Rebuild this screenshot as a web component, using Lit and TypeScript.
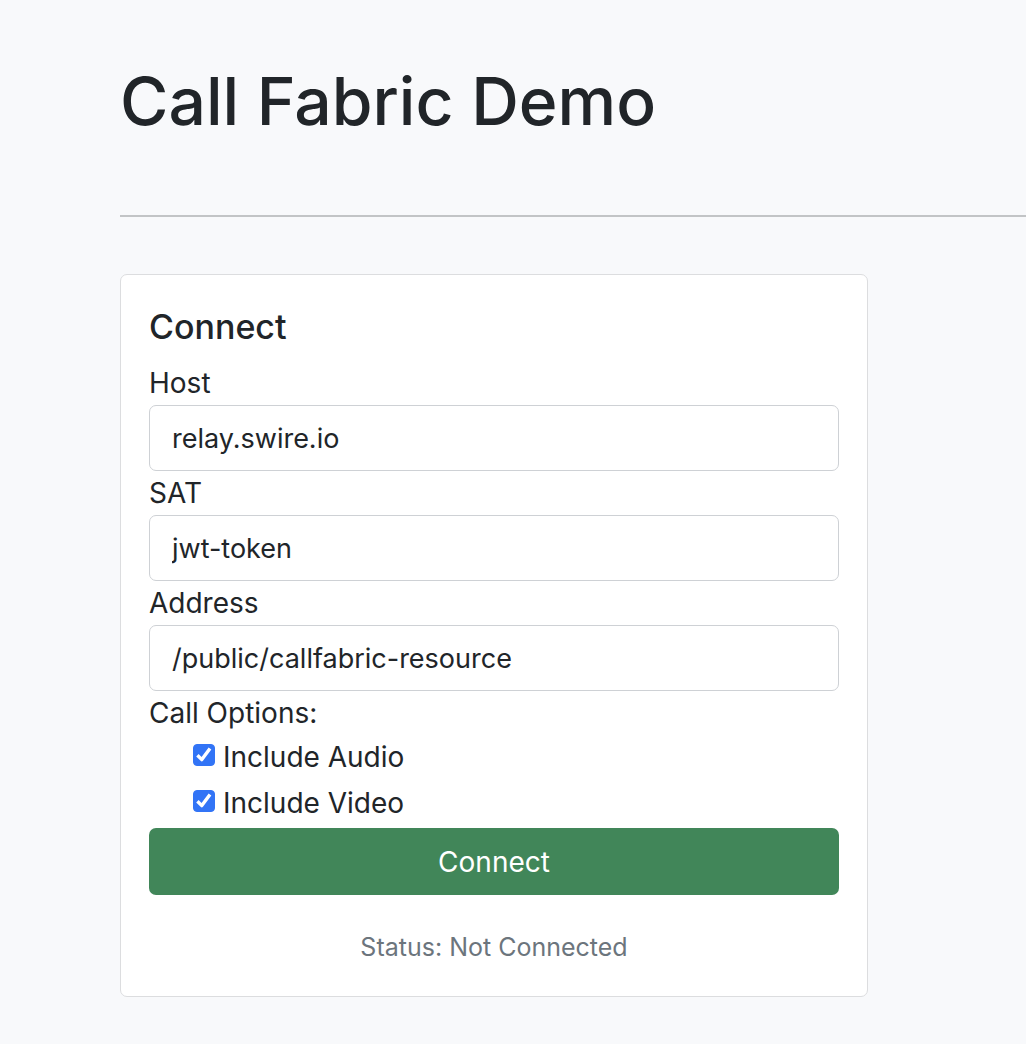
import { LitElement, html, css } from "lit";
import { customElement, state } from "lit/decorators.js";

@customElement("app-root")
export class AppRoot extends LitElement {
  static styles = css`
    :host {
      display: block;
      min-height: 100vh;
      box-sizing: border-box;
      padding: 58px 0 47px 120px;
      background: #f8f9fb;
      color: #212529;
      font-family: Inter, "Liberation Sans", sans-serif;
      font-size: 28px;
      line-height: 44px;
      overflow: hidden;
    }
    *, *::before, *::after { box-sizing: border-box; }
    h1 { margin: 0; font-size: 66px; line-height: 86px; font-weight: 550; }
    hr { margin: 71px 0 57px; border: 0; border-top: 2px solid #c2c4c6; }
    .card {
      width: calc(100% - 158px);
      max-width: 748px;
      padding: 28px;
      background: #fff;
      border: 1px solid #dcdddf;
      border-radius: 7px;
    }
    h2 { margin: 0 0 11px; font-size: 34px; line-height: 47px; font-weight: 550; }
    label, legend { display: block; padding: 0; }
    .field {
      display: block;
      width: 100%;
      height: 66px;
      padding: 0 22px;
      border: 1px solid #ced1d5;
      border-radius: 7px;
      background: #fff;
      color: inherit;
      font: inherit;
      font-size: 27px;
    }
    fieldset { margin: 0; padding: 0 0 3px; border: 0; }
    .options { display: grid; gap: 2px; padding-left: 44px; }
    .option { display: flex; align-items: flex-start; gap: 8px; }
    .box { display: grid; place-items: center; padding-top: 9px; }
    .box > * { grid-area: 1 / 1; }
    .check {
      appearance: none;
      width: 22px;
      height: 22px;
      margin: 0;
      border: 1px solid #767676;
      border-radius: 4px;
      background: #fff;
    }
    .check:checked { background: #3274f6; border-color: #3274f6; }
    .tick { width: 22px; height: 22px; pointer-events: none; z-index: 1; }
    .connect {
      display: block;
      width: 100%;
      height: 67px;
      padding: 0;
      border: 0;
      border-radius: 7px;
      background: #418659;
      color: #fff;
      font: inherit;
    }
    .status { margin: 31px 0 0; text-align: center; color: #6c757d; font-size: 25px; line-height: 42px; }
  `;

  @state() private audio = true;
  @state() private video = true;

  private option(id: string, text: string, checked: boolean, change: (on: boolean) => void) {
    return html`
      <div class="option">
        <span class="box">
          <input class="check" type="checkbox" id=${id} .checked=${checked}
            @change=${(e: Event) => change((e.target as HTMLInputElement).checked)} />
          ${checked
            ? html`<svg class="tick" viewBox="0 0 22 22" aria-hidden="true">
                <path d="M4.4 11.2 8.8 15.6 17 4.4" fill="none" stroke="#fff" stroke-width="3.4" stroke-linejoin="round" />
              </svg>`
            : null}
        </span>
        <label for=${id}>${text}</label>
      </div>`;
  }

  render() {
    return html`
      <header><h1>Call Fabric Demo</h1></header>
      <hr />
      <main class="card">
        <h2>Connect</h2>
        <label for="host">Host</label>
        <input class="field" id="host" type="text" value="relay.swire.io" />
        <label for="token">SAT</label>
        <input class="field" id="token" type="text" value="jwt-token" />
        <label for="address">Address</label>
        <input class="field" id="address" type="text" value="/public/callfabric-resource" />
        <fieldset>
          <legend>Call Options:</legend>
          <div class="options">
            ${this.option("audio", "Include Audio", this.audio, (on) => (this.audio = on))}
            ${this.option("video", "Include Video", this.video, (on) => (this.video = on))}
          </div>
        </fieldset>
        <button class="connect" type="button">Connect</button>
        <p class="status">Status: Not Connected</p>
      </main>`;
  }
}
